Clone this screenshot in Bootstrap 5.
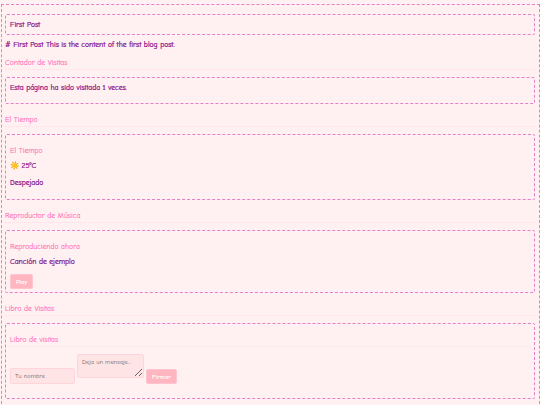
<!DOCTYPE html>
<html lang="es"><head><meta charset="utf-8">
<link href="https://cdn.jsdelivr.net/npm/bootstrap@5.3.0/dist/css/bootstrap.min.css" rel="stylesheet">
<style>
html,body{height:405px;overflow:hidden}
body{background:#fff0f2;color:#800080;font-family:"Comic Neue","DejaVu Sans",sans-serif;font-size:7.6px;line-height:12px;-webkit-text-stroke:.2px currentColor}
.shell{border:1px dashed #e580c8;border-bottom:0;margin:4px 0 0 1px;padding:9px 4px 0 3px;height:420px}
.dash{border:1px dashed #e580c8;border-radius:2px;padding:4px}
.ttl{color:#ff69b4;font-weight:400;margin:0;-webkit-text-stroke:.1px currentColor}
.sect{border-bottom:1px dotted #ffe0e6;height:13px;margin:0 0 7px 0}
.first{height:21px}
.intro{margin:4px 0 6px 0}
.visits{height:27px;margin-bottom:10px}
.wx{height:66px}
.pl{height:63px}
.gb{height:76px}
.after{margin-top:10px}
.inner{margin-top:6px}
.s3{margin-top:3px}
.s5{margin-top:5px}
.s6{margin-top:6px}
.pbtn{display:block;background:#ffb6c1;color:#fff;border:1px solid #ffc4cd;border-radius:2px;font-size:6.4px;font-weight:700;padding:0 5px;height:15px;line-height:12px;-webkit-text-stroke:0}
.fld{display:block;background:#ffe4e6;border:1px solid #ffd4da;border-radius:2px;font-size:6.4px;color:#666;padding:2px 4px;font-family:inherit;-webkit-text-stroke:0}
.fld::placeholder{color:#666}
.nameip{width:65px;height:16px}
.msgta{width:67px;height:24px;line-height:10px;margin-bottom:6px}
.fline{gap:2px}
</style></head><body>
<div class="shell">
<div class="dash first">First Post</div>
<p class="intro"># First Post This is the content of the first blog post.</p>
<div class="sect ttl">Contador de Visitas</div>
<div class="dash visits">Esta página ha sido visitada 1 veces.</div>
<div class="sect ttl">El Tiempo</div>
<div class="dash wx"><div class="ttl inner">El Tiempo</div><div class="s3">☀️ 25°C</div><div class="s5">Despejado</div></div>
<div class="sect ttl after">Reproductor de Música</div>
<div class="dash pl"><div class="ttl inner">Reproduciendo ahora</div><div class="s3">Canción de ejemplo</div><button class="pbtn s6">Play</button></div>
<div class="sect ttl after">Libro de Visitas</div>
<div class="dash gb"><div class="sect ttl inner">Libro de visitas</div><div class="d-flex align-items-end fline"><input class="fld nameip" placeholder="Tu nombre"><textarea class="fld msgta" placeholder="Deja un mensaje..."></textarea><button class="pbtn">Firmar</button></div></div>
</div>
</body></html>
